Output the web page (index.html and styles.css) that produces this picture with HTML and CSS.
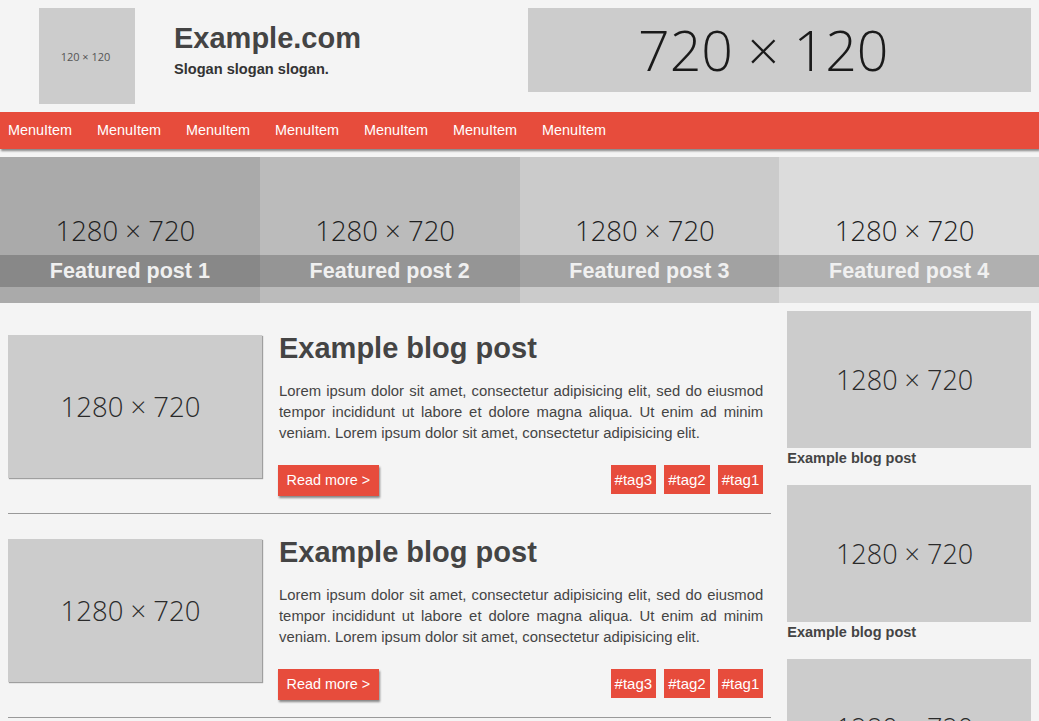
FILE: index.html
```html
<!DOCTYPE html>
<html lang="en">
<head>
<meta charset="utf-8">
<title>Example.com</title>
<link rel="stylesheet" href="styles.css">
</head>
<body>
<header class="site-header">
  <div class="brand">
    <div class="logo-col"><div class="ph logo">120 × 120</div></div>
    <div class="titles">
      <h1 class="site-title">Example.com</h1>
      <p class="slogan">Slogan slogan slogan.</p>
    </div>
  </div>
  <div class="banner-col"><div class="ph banner">720 × 120</div></div>
</header>

<nav class="menu">
  <a class="menu-item" href="#">MenuItem</a>
  <a class="menu-item" href="#">MenuItem</a>
  <a class="menu-item" href="#">MenuItem</a>
  <a class="menu-item" href="#">MenuItem</a>
  <a class="menu-item" href="#">MenuItem</a>
  <a class="menu-item" href="#">MenuItem</a>
  <a class="menu-item" href="#">MenuItem</a>
</nav>

<section class="featured">
  <a class="tile tile-1" href="#"><span class="ph-text">1280 × 720</span><span class="tile-caption">Featured post 1</span></a>
  <a class="tile tile-2" href="#"><span class="ph-text">1280 × 720</span><span class="tile-caption">Featured post 2</span></a>
  <a class="tile tile-3" href="#"><span class="ph-text">1280 × 720</span><span class="tile-caption">Featured post 3</span></a>
  <a class="tile tile-4" href="#"><span class="ph-text">1280 × 720</span><span class="tile-caption">Featured post 4</span></a>
</section>

<div class="layout">
  <main class="posts">
    <article class="post">
      <div class="ph post-image">1280 × 720</div>
      <div class="post-body">
        <h2 class="post-title">Example blog post</h2>
        <p class="post-text">Lorem ipsum dolor sit amet, consectetur adipisicing elit, sed do eiusmod tempor incididunt ut labore et dolore magna aliqua. Ut enim ad minim veniam. Lorem ipsum dolor sit amet, consectetur adipisicing elit.</p>
        <div class="post-foot">
          <a class="btn" href="#">Read more &gt;</a>
          <div class="tags"><a class="tag" href="#">#tag3</a><a class="tag" href="#">#tag2</a><a class="tag" href="#">#tag1</a></div>
        </div>
      </div>
    </article>
    <article class="post">
      <div class="ph post-image">1280 × 720</div>
      <div class="post-body">
        <h2 class="post-title">Example blog post</h2>
        <p class="post-text">Lorem ipsum dolor sit amet, consectetur adipisicing elit, sed do eiusmod tempor incididunt ut labore et dolore magna aliqua. Ut enim ad minim veniam. Lorem ipsum dolor sit amet, consectetur adipisicing elit.</p>
        <div class="post-foot">
          <a class="btn" href="#">Read more &gt;</a>
          <div class="tags"><a class="tag" href="#">#tag3</a><a class="tag" href="#">#tag2</a><a class="tag" href="#">#tag1</a></div>
        </div>
      </div>
    </article>
  </main>
  <aside class="sidebar">
    <a class="side-item" href="#"><div class="ph side-image">1280 × 720</div><div class="side-caption">Example blog post</div></a>
    <a class="side-item" href="#"><div class="ph side-image">1280 × 720</div><div class="side-caption">Example blog post</div></a>
    <a class="side-item" href="#"><div class="ph side-image">1280 × 720</div><div class="side-caption">Example blog post</div></a>
  </aside>
</div>
</body>
</html>
```

FILE: styles.css
```css
html, body {
  margin: 0;
  padding: 0;
}
body {
  background: #f4f4f4;
  color: #444;
  font-family: "Liberation Sans", Arial, sans-serif;
}
a {
  text-decoration: none;
  color: inherit;
}

/* placeholders */
.ph {
  box-sizing: border-box;
  background: #ccc;
  color: #2a2a2a;
  font-family: "Open Sans", sans-serif;
  font-weight: 300;
  display: flex;
  align-items: center;
  justify-content: center;
  white-space: nowrap;
}

/* header */
.site-header {
  display: grid;
  grid-template-columns: 1fr 1fr;
  padding: 8px 0;
}
.brand {
  display: grid;
  grid-template-columns: 174px 1fr;
}
.logo-col {
  display: flex;
  justify-content: center;
}
.logo {
  width: 96px;
  height: 96px;
  padding-right: 3px;
  font-size: 11px;
  font-weight: 400;
  color: #555;
}
.titles {
  padding-top: 13px;
}
.site-title {
  margin: 0;
  font-size: 29px;
  line-height: 34px;
  font-weight: bold;
  color: #444;
}
.slogan {
  margin: 5px 0 0;
  font-size: 14.6px;
  line-height: 18px;
  font-weight: bold;
  color: #333;
}
.banner-col {
  padding: 0 8px;
}
.banner {
  height: 84px;
  padding-right: 32px;
  padding-bottom: 2px;
  font-size: 55.5px;
  color: #1a1a1a;
}

/* menu */
.menu {
  box-sizing: border-box;
  display: flex;
  gap: 25px;
  padding: 0 0 2px 8px;
  height: 37px;
  align-items: center;
  background: #e74c3c;
  box-shadow: 1px 2px 2px rgba(0, 0, 0, 0.45);
}
.menu-item {
  color: #fff;
  font-size: 14.4px;
}

/* featured */
.featured {
  display: grid;
  grid-template-columns: repeat(4, 1fr);
  margin-top: 8px;
}
.tile {
  position: relative;
  box-sizing: border-box;
  height: 146px;
  padding-right: 9px;
  display: flex;
  align-items: center;
  justify-content: center;
  font-family: "Open Sans", sans-serif;
  font-weight: 300;
  font-size: 27.5px;
  color: #1e1e1e;
}
.tile-1 { background: #aaa; }
.tile-2 { background: #bbb; }
.tile-3 { background: #cbcbcb; }
.tile-4 { background: #dcdcdc; }
.tile-caption {
  position: absolute;
  left: 0;
  right: 0;
  top: 98px;
  height: 32px;
  line-height: 32px;
  text-align: center;
  background: rgba(0, 0, 0, 0.2);
  font-family: "Liberation Sans", Arial, sans-serif;
  font-weight: bold;
  font-size: 21.5px;
  color: #f0f0f0;
}

/* layout */
.layout {
  display: grid;
  grid-template-columns: 3fr 1fr;
}
.posts {
  padding: 7px 8px 8px;
}
.sidebar {
  padding: 8px;
}

/* post */
.post {
  display: flex;
  align-items: flex-start;
  padding: 25px 0 17px;
  border-bottom: 1px solid #999;
}
.post-image {
  flex: 0 0 254px;
  height: 143px;
  padding-right: 9px;
  font-size: 27.5px;
  box-shadow: 1px 1px 1px rgba(0, 0, 0, 0.35);
}
.post-body {
  flex: 1;
  margin-left: 17px;
  padding-right: 8px;
}
.post-title {
  margin: 0;
  font-size: 29px;
  line-height: 26px;
  font-weight: bold;
  color: #444;
}
.post-text {
  margin: 20px 0 0;
  font-size: 14.85px;
  line-height: 21px;
  text-align: justify;
  color: #444;
}
.post-foot {
  display: flex;
  justify-content: space-between;
  align-items: flex-start;
  margin-top: 21px;
}
.btn {
  display: block;
  height: 31px;
  line-height: 31px;
  padding: 0 8.5px;
  margin-left: -1px;
  background: #e74c3c;
  color: #fff;
  font-size: 14.4px;
  box-shadow: 1px 2px 2px rgba(0, 0, 0, 0.45);
}
.tags {
  display: flex;
  gap: 8px;
}
.tag {
  display: block;
  height: 29px;
  line-height: 29px;
  padding: 0 4px;
  background: #e74c3c;
  color: #fff;
  font-size: 15px;
}

/* sidebar */
.side-item {
  display: block;
  margin-bottom: 17px;
}
.side-image {
  height: 137px;
  padding-right: 9px;
  font-size: 27px;
}
.side-caption {
  font-size: 14.5px;
  line-height: 20px;
  font-weight: bold;
  color: #444;
}
```
